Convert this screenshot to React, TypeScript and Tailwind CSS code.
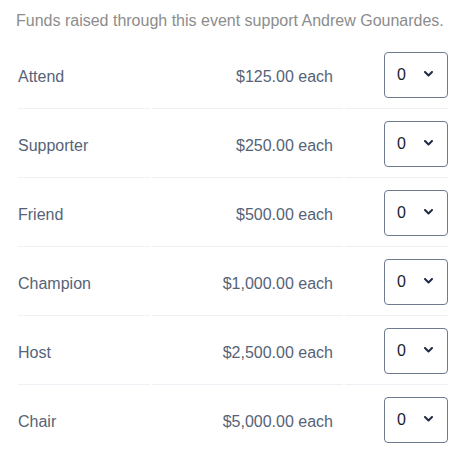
import React from "react";

const tiers = [
  { name: "Attend", price: "$125.00" },
  { name: "Supporter", price: "$250.00" },
  { name: "Friend", price: "$500.00" },
  { name: "Champion", price: "$1,000.00" },
  { name: "Host", price: "$2,500.00" },
  { name: "Chair", price: "$5,000.00" },
];

export default function App() {
  return (
    <div className="pl-4 pr-[6px] pt-[9px] font-['Liberation_Sans',Arial,sans-serif] bg-white min-h-screen">
      <p className="text-base leading-6 text-[#8c8c8c]">
        Funds raised through this event support Andrew Gounardes.
      </p>
      <table className="mt-[7px] border-separate border-spacing-[2px] w-[434px]">
        <tbody>
          {tiers.map((t) => (
            <tr key={t.name}>
              <td className="w-[132px] border-b border-[#edf0f4] pt-[12px] pb-[8px] align-middle text-base leading-6 text-[#566377]">
                {t.name}
              </td>
              <td className="w-[191px] border-b border-[#edf0f4] pt-[12px] pb-[8px] pr-[10px] text-right align-middle text-base leading-6 text-[#566377]">
                {t.price} each
              </td>
              <td className="w-[103px] border-b border-[#edf0f4] py-[10px] align-middle">
                <div className="ml-auto flex h-[46px] w-[64px] items-center rounded-[4px] border border-[#6e7b8f] pl-[12px] pr-[14px]">
                  <span className="text-base leading-6 text-[#1a202c]">0</span>
                  <svg
                    className="ml-auto -mt-[3px]"
                    width="9"
                    height="6"
                    viewBox="0 0 9 6"
                    fill="none"
                  >
                    <path
                      d="M1 1l3.5 3.5L8 1"
                      stroke="#1f2a44"
                      strokeWidth="2"
                      strokeLinecap="round"
                      strokeLinejoin="round"
                    />
                  </svg>
                </div>
              </td>
            </tr>
          ))}
        </tbody>
      </table>
    </div>
  );
}
